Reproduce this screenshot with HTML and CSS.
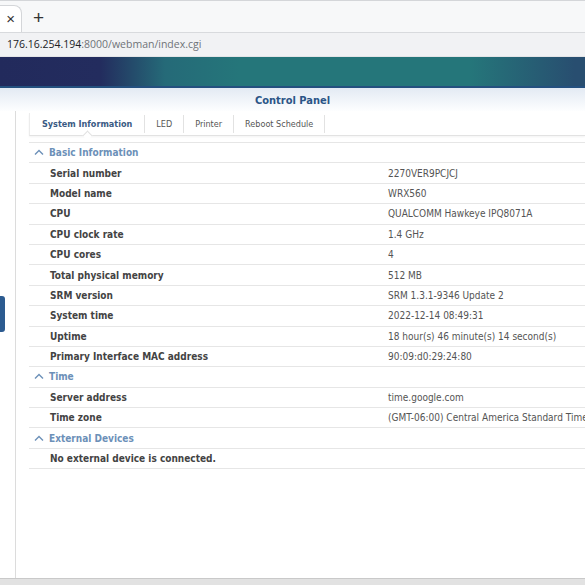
FILE: index.html
```html
<!DOCTYPE html>
<html lang="en">
<head>
  <meta charset="UTF-8" />
  <title>Control Panel</title>
  <link rel="stylesheet" href="styles.css">
</head>
<body>
  <div class="browser">
    <div class="tabstrip">
      <div class="tab"><span class="close">&times;</span></div>
      <span class="newtab">+</span>
    </div>
    <div class="addressbar"><span class="host">176.16.254.194</span><span class="path">:8000/webman/index.cgi</span></div>
  </div>

  <div class="banner"></div>

  <div class="app">
    <div class="titlebar">Control Panel</div>
    <div class="workspace">
      <aside class="sidebar"><span class="side-tab"></span></aside>
      <main class="panel">
        <nav class="tabs">
          <span class="tabitem active">System Information</span>
          <span class="tabitem">LED</span>
          <span class="tabitem">Printer</span>
          <span class="tabitem">Reboot Schedule</span>
        </nav>

        <table class="info">
          <colgroup><col class="label-col"><col></colgroup>
          <tr class="section"><td colspan="2"><svg class="chev" width="10" height="6" viewBox="0 0 10 6"><polyline points="1,5.5 5,1.5 9,5.5" /></svg>Basic Information</td></tr>
          <tr><th>Serial number</th><td>2270VER9PCJCJ</td></tr>
          <tr><th>Model name</th><td>WRX560</td></tr>
          <tr><th>CPU</th><td>QUALCOMM Hawkeye IPQ8071A</td></tr>
          <tr><th>CPU clock rate</th><td>1.4 GHz</td></tr>
          <tr><th>CPU cores</th><td>4</td></tr>
          <tr><th>Total physical memory</th><td>512 MB</td></tr>
          <tr><th>SRM version</th><td>SRM 1.3.1-9346 Update 2</td></tr>
          <tr><th>System time</th><td>2022-12-14 08:49:31</td></tr>
          <tr><th>Uptime</th><td>18 hour(s) 46 minute(s) 14 second(s)</td></tr>
          <tr><th>Primary Interface MAC address</th><td>90:09:d0:29:24:80</td></tr>
          <tr class="section"><td colspan="2"><svg class="chev" width="10" height="6" viewBox="0 0 10 6"><polyline points="1,5.5 5,1.5 9,5.5" /></svg>Time</td></tr>
          <tr><th>Server address</th><td>time.google.com</td></tr>
          <tr><th>Time zone</th><td>(GMT-06:00) Central America Standard Time</td></tr>
          <tr class="section"><td colspan="2"><svg class="chev" width="10" height="6" viewBox="0 0 10 6"><polyline points="1,5.5 5,1.5 9,5.5" /></svg>External Devices</td></tr>
          <tr><th colspan="2">No external device is connected.</th></tr>
        </table>
      </main>
    </div>
  </div>

  <div class="statusbar"></div>
</body>
</html>
```

FILE: styles.css
```css
html, body {
  margin: 0;
  height: 585px;
  overflow: hidden;
}

body {
  display: flex;
  flex-direction: column;
  background: #fff;
  font-family: "DejaVu Sans Condensed", "DejaVu Sans", sans-serif;
  font-size: 10px;
  color: #444;
}

/* browser chrome */
.tabstrip {
  height: 31px;
  display: flex;
  align-items: flex-end;
  background: #f7f8f9;
  border-top: 1px solid #d4d6d9;
  border-bottom: 1px solid #d8dadd;
  font-family: "Liberation Sans", sans-serif;
}

.tab {
  width: 22px;
  height: 27px;
  background: #fff;
  border-right: 1px solid #d4d6d9;
  border-top: 1px solid #d4d6d9;
  border-top-right-radius: 8px;
  display: flex;
  align-items: center;
  justify-content: flex-end;
  padding-right: 6px;
  box-sizing: border-box;
}

.close {
  font-size: 15px;
  color: #333;
  line-height: 1;
  margin-top: -2px;
}

.newtab {
  margin-left: 11px;
  height: 27px;
  line-height: 26px;
  font-size: 19px;
  color: #333;
}

.addressbar {
  height: 23px;
  line-height: 22px;
  background: #f1f2f4;
  border-bottom: 1px solid #e4e5e7;
  padding-left: 7px;
  font-family: "Open Sans", sans-serif;
  font-size: 10.5px;
}

.host { color: #202124; }
.path { color: #6f7378; }

/* DSM banner */
.banner {
  height: 29px;
  border-bottom: 2px solid #24507f;
  background: linear-gradient(to right, #222a5c 0, #232c5e 100px, #256a78 165px, #25767a 240px, #25767a 470px, #284e70 575px);
}

/* control panel window */
.app {
  flex: 1;
  display: flex;
  flex-direction: column;
}

.titlebar {
  height: 23px;
  line-height: 26px;
  text-align: center;
  font-weight: bold;
  font-size: 11px;
  color: #2b5587;
  background: linear-gradient(to bottom, #e3eaf3, #fdfeff);
}

.workspace {
  flex: 1;
  display: flex;
}

.sidebar {
  width: 15px;
  border-right: 1px solid #dcdcdc;
}

.side-tab {
  display: block;
  width: 5px;
  height: 36px;
  margin-top: 185px;
  background: #2c5b90;
  border-radius: 0 3px 3px 0;
}

.panel {
  flex: 1;
  min-width: 0;
  padding-left: 13px;
}

.tabs {
  display: flex;
  align-items: center;
  height: 22px;
  margin-top: 2px;
  border-bottom: 1px solid #e2e2e2;
  border-left: 1px solid #ececec;
  box-shadow: 0 1px 2px rgba(0, 0, 0, 0.05);
  font-size: 9px;
}

.tabitem {
  position: relative;
  padding: 0 11px;
  line-height: 18px;
  color: #555;
  border-right: 1px solid #e2e2e2;
}

.tabitem.active {
  padding: 0 12px;
  font-weight: bold;
  color: #3a5a83;
}

.tabitem.active::after {
  content: "";
  position: absolute;
  left: 50%;
  bottom: -6px;
  width: 6px;
  height: 6px;
  margin-left: -3px;
  background: #fff;
  border-top: 1px solid #e2e2e2;
  border-left: 1px solid #e2e2e2;
  transform: rotate(45deg);
}

.info {
  width: 100%;
  margin-top: 6px;
  border-collapse: collapse;
  border-top: 1px solid #e6e6e6;
  table-layout: fixed;
}

.label-col {
  width: 359px;
}

.info tr {
  height: 20.4px;
  border-bottom: 1px solid #e6e6e6;
}

.info th,
.info td {
  padding: 0;
  text-align: left;
  white-space: nowrap;
  overflow: visible;
}

.info th {
  padding-left: 21px;
  font-weight: bold;
  color: #434343;
}

.info td {
  color: #545454;
}

.info .section td {
  padding-left: 5px;
  font-weight: bold;
  color: #6c90b8;
}

.chev {
  margin-right: 5px;
  vertical-align: 1px;
}

.chev polyline {
  fill: none;
  stroke: #6c90b8;
  stroke-width: 1.4;
}

.statusbar {
  height: 6px;
  border-top: 1px solid #c9c9c9;
  background: #e2e2e2;
}
```
